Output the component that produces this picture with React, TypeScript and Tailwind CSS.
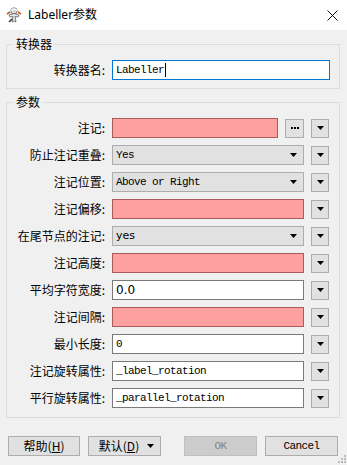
import React from 'react'

const cjk = { fontFamily: '"Noto Sans CJK SC", "Noto Sans", sans-serif' }
const mono = { fontFamily: '"Liberation Mono", "Noto Sans CJK SC", monospace' }

function Tri({ className = '' }: { className?: string }) {
  return (
    <svg width="7" height="4" viewBox="0 0 7 4" className={className}>
      <path d="M0 0h7L3.5 4z" fill="#000" />
    </svg>
  )
}

function DropBtn() {
  return (
    <div className="w-[18px] h-[19px] shrink-0 border border-[#adadad] bg-[#e1e1e1] flex items-center justify-center">
      <Tri />
    </div>
  )
}

function Row({ label, children }: { label: string; children: React.ReactNode }) {
  return (
    <div className="flex h-5 items-center">
      <div className="w-[98px] shrink-0 text-right text-[12px] leading-4 text-black" style={cjk}>
        {label}
      </div>
      <div className="ml-[7px] flex items-center gap-[7px]">{children}</div>
    </div>
  )
}

function Pink({ w = 192 }: { w?: number }) {
  return <div className="h-5 border border-[#a85b5b] bg-[#ffa0a0]" style={{ width: w }} />
}

function Combo({ value, sans }: { value: string; sans?: boolean }) {
  return (
    <div className="w-[192px] h-5 border border-[#adadad] bg-[#e1e1e1] flex items-center justify-between pl-[3px] pr-[6px]">
      <span
        className={sans ? 'text-[11px] leading-4' : 'text-[11px] leading-4 tracking-[-0.6px]'}
        style={sans ? { fontFamily: '"DejaVu Sans", sans-serif' } : mono}
      >
        {value}
      </span>
      <Tri />
    </div>
  )
}

function Text({ value, sans }: { value: string; sans?: boolean }) {
  return (
    <div className="w-[192px] h-5 border border-[#7a7a7a] bg-white flex items-center pl-[3px]">
      <span
        className={sans ? 'text-[12px] leading-4' : 'text-[11px] leading-4 tracking-[-0.6px]'}
        style={sans ? { fontFamily: '"DejaVu Sans", sans-serif' } : mono}
      >
        {value}
      </span>
    </div>
  )
}

export default function App() {
  return (
    <div className="relative w-[347px] h-[465px] bg-[#f0f0f0] overflow-hidden select-none">
      {/* title bar */}
      <div className="h-[30px] bg-white flex items-center">
        <svg width="18" height="18" viewBox="0 0 18 18" className="ml-[5px]">
          <circle cx="9" cy="5" r="3.2" fill="#d9d9d9" stroke="#6b6b6b" strokeWidth="0.8" />
          <path d="M6 4.5 Q9 1.5 12 4.5" fill="none" stroke="#ffffff" strokeWidth="1.4" />
          <path d="M4 9 L9 7.5 L14 9 L13 11 L10 10.5 L11 16 L9 15 L7 16 L8 10.5 L5 11z" fill="#e8e8e8" stroke="#5a5a5a" strokeWidth="0.8" />
          <path d="M2 8 L5 6 M16 8 L13 6" stroke="#c85a1e" strokeWidth="1.6" />
          <path d="M7 13 L4 16" stroke="#333" strokeWidth="1.4" />
        </svg>
        <span className="ml-[5px] text-[12px] leading-4 text-black" style={{ fontFamily: '"Noto Sans", "Noto Sans CJK SC", sans-serif' }}>
          Labeller参数
        </span>
        <svg width="11" height="11" viewBox="0 0 11 11" className="ml-auto mr-[9px]">
          <path d="M0.5 0.5L10.5 10.5M10.5 0.5L0.5 10.5" stroke="#111" strokeWidth="1" />
        </svg>
      </div>

      {/* 转换器 group */}
      <fieldset className="ml-[6px] mr-[7px] mt-[6px] border border-[#dcdcdc] pt-[8px] pb-[8px]">
        <legend className="ml-[6px] px-[3px] text-[12px] leading-4" style={cjk}>
          转换器
        </legend>
        <Row label="转换器名:">
          <div className="w-[218px] h-5 border border-[#0078d7] bg-white flex items-center pl-[3px]">
            <span className="text-[11px] leading-4 tracking-[-0.6px]" style={mono}>
              Labeller
            </span>
            <span className="ml-px w-px h-[14px] bg-black" />
          </div>
        </Row>
      </fieldset>

      {/* 参数 group */}
      <fieldset className="ml-[6px] mr-[7px] mt-[5px] border border-[#dcdcdc] pt-[8px] pb-[9px]">
        <legend className="ml-[6px] px-[3px] text-[12px] leading-4" style={cjk}>
          参数
        </legend>
        <div className="flex flex-col gap-[7px]">
          <Row label="注记:">
            <Pink w={166} />
            <div className="w-[19px] h-[19px] border border-[#adadad] bg-[#e1e1e1] flex items-center justify-center">
              <svg width="8" height="2" viewBox="0 0 8 2">
                <path d="M0 0h2v2H0zM3 0h2v2H3zM6 0h2v2H6z" fill="#000" />
              </svg>
            </div>
            <DropBtn />
          </Row>
          <Row label="防止注记重叠:">
            <Combo value="Yes" />
            <DropBtn />
          </Row>
          <Row label="注记位置:">
            <Combo value="Above or Right" />
            <DropBtn />
          </Row>
          <Row label="注记偏移:">
            <Pink />
            <DropBtn />
          </Row>
          <Row label="在尾节点的注记:">
            <Combo value="yes" sans />
            <DropBtn />
          </Row>
          <Row label="注记高度:">
            <Pink />
            <DropBtn />
          </Row>
          <Row label="平均字符宽度:">
            <Text value="0.0" sans />
            <DropBtn />
          </Row>
          <Row label="注记间隔:">
            <Pink />
            <DropBtn />
          </Row>
          <Row label="最小长度:">
            <Text value="0" />
            <DropBtn />
          </Row>
          <Row label="注记旋转属性:">
            <Text value="_label_rotation" />
            <DropBtn />
          </Row>
          <Row label="平行旋转属性:">
            <Text value="_parallel_rotation" />
            <DropBtn />
          </Row>
        </div>
      </fieldset>

      {/* buttons */}
      <div className="flex mt-[18px] ml-[8px] text-[12px] leading-4">
        <button className="w-[72px] h-5 border border-[#adadad] bg-[#e1e1e1] flex items-center justify-center" style={cjk}>
          帮助(<span className="underline">H</span>)
        </button>
        <button className="ml-[8px] w-[73px] h-5 border border-[#adadad] bg-[#e1e1e1] flex items-center justify-center gap-[8px] pl-[4px]" style={cjk}>
          <span>
            默认(<span className="underline">D</span>)
          </span>
          <Tri />
        </button>
        <button className="ml-[23px] w-[73px] h-5 border border-[#bfbfbf] bg-[#cccccc] flex items-center justify-center text-[#838383]" style={mono}>
          <span className="text-[11px] tracking-[-0.6px]">OK</span>
        </button>
        <button className="ml-[8px] w-[73px] h-5 border border-[#adadad] bg-[#e1e1e1] flex items-center justify-center" style={mono}>
          <span className="text-[11px] tracking-[-0.6px]">Cancel</span>
        </button>
      </div>

      {/* resize grip */}
      <svg width="9" height="9" viewBox="0 0 9 9" className="absolute right-[1px] bottom-[2px]">
        <path d="M7 1h2v2H7zM4 4h2v2H4zM7 4h2v2H7zM1 7h2v2H1zM4 7h2v2H4zM7 7h2v2H7z" fill="#bcbcbc" />
      </svg>
    </div>
  )
}
